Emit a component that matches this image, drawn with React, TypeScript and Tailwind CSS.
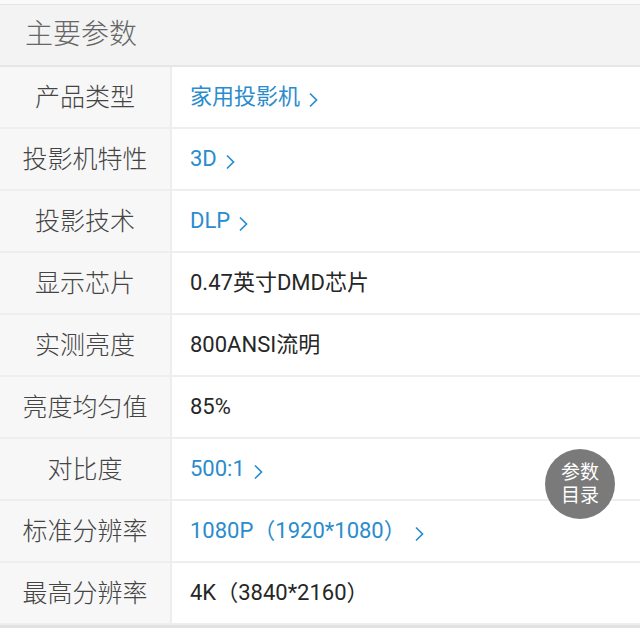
import React from "react";

type Row = { label: string; value: string; link?: boolean };

const rows: Row[] = [
  { label: "产品类型", value: "家用投影机", link: true },
  { label: "投影机特性", value: "3D", link: true },
  { label: "投影技术", value: "DLP", link: true },
  { label: "显示芯片", value: "0.47英寸DMD芯片" },
  { label: "实测亮度", value: "800ANSI流明" },
  { label: "亮度均匀值", value: "85%" },
  { label: "对比度", value: "500:1", link: true },
  { label: "标准分辨率", value: "1080P（1920*1080）", link: true },
  { label: "最高分辨率", value: "4K（3840*2160）" },
];

function Chevron() {
  return (
    <svg width="11" height="16" viewBox="0 0 11 16" className="ml-2 mt-[5px] shrink-0">
      <path d="M2 1.5 L8.5 8 L2 14.5" fill="none" stroke="#2a8ccd" strokeWidth="1.7" />
    </svg>
  );
}

export default function App() {
  return (
    <div className="relative w-[640px] h-[628px] overflow-hidden bg-[#fafafa] font-['Roboto','Noto_Sans_CJK_SC',sans-serif]">
      <div className="h-[4px] bg-[#fafafa]" />
      {/* header */}
      <div className="h-[63px] bg-[#f3f3f3] border-t border-[#e4e4e4] border-b-2 border-b-[#e6e6e6] flex items-center pl-[25px]">
        <span className="text-[28px] text-[#666] leading-none font-light">主要参数</span>
      </div>

      {/* rows */}
      {rows.map((r) => (
        <div key={r.label} className="h-[62px] flex border-b-2 border-[#eeeeee] bg-white">
          <div className="w-[172px] shrink-0 bg-[#f7f7f7] border-r-2 border-[#ededed] flex items-center justify-center">
            <span className="text-[25px] text-[#444] leading-none font-light">{r.label}</span>
          </div>
          <div className="flex-1 flex items-center pl-[18px]">
            <span className={`text-[22px] leading-none ${r.link ? "text-[#2a8ccd]" : "text-[#262626]"}`}>
              {r.value}
            </span>
            {r.link && <Chevron />}
          </div>
        </div>
      ))}
      <div className="h-[4px] bg-[#e2e2e2]" />

      {/* floating catalog button */}
      <div className="absolute left-[545px] top-[449px] w-[70px] h-[70px] rounded-full bg-[#7a7a7a] flex flex-col items-center justify-center text-white text-[19px] leading-[23px]">
        <span>参数</span>
        <span>目录</span>
      </div>
    </div>
  );
}
